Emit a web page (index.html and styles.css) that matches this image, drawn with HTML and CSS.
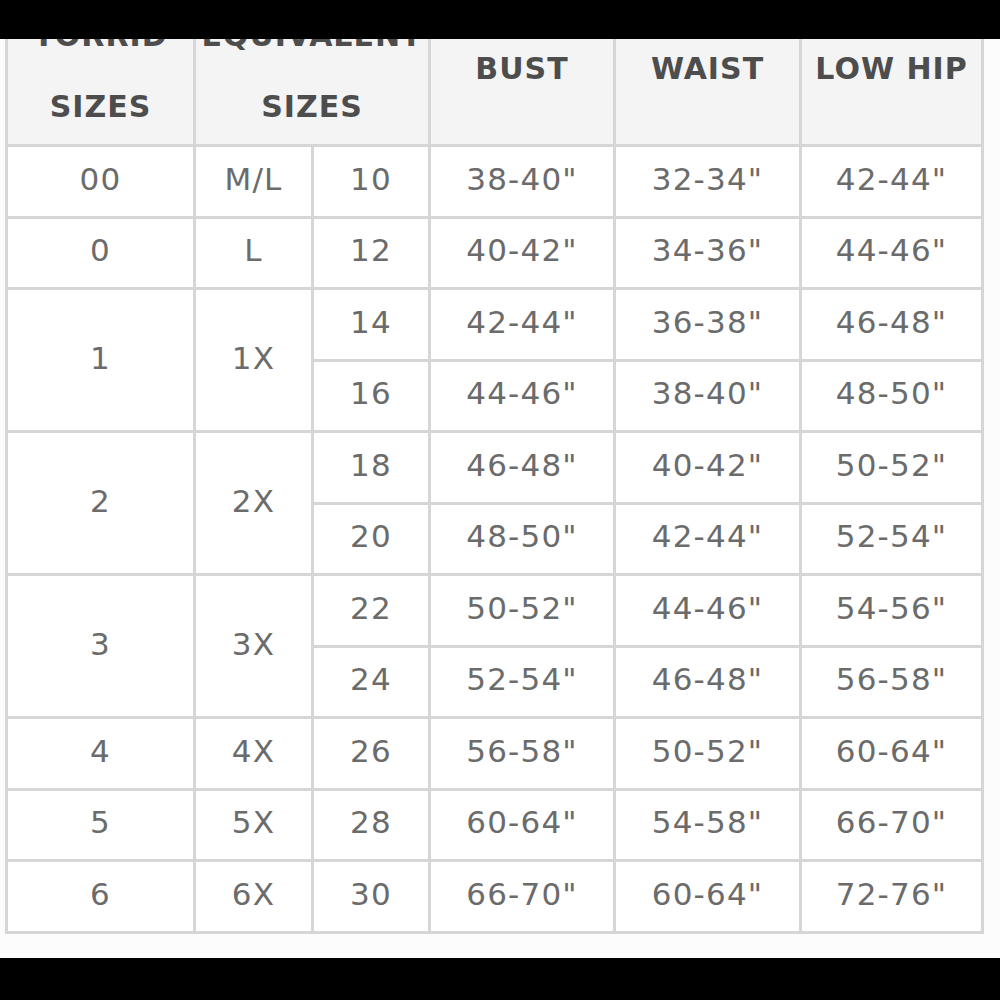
FILE: index.html
```html
<!DOCTYPE html>
<html>
<head>
<meta charset="utf-8">
<link rel="stylesheet" href="styles.css">
</head>
<body>
<div class="topbar"></div>
<div class="viewport">
  <table class="chart">
    <colgroup>
      <col class="c1"><col class="c2"><col class="c3"><col class="c4"><col class="c5"><col class="c6">
    </colgroup>
    <thead>
      <tr class="head">
        <th>TORRID<br>SIZES</th>
        <th colspan="2">EQUIVALENT<br>SIZES</th>
        <th class="single">BUST</th>
        <th class="single">WAIST</th>
        <th class="single">LOW HIP</th>
      </tr>
    </thead>
    <tbody>
      <tr><td>00</td><td>M/L</td><td>10</td><td>38-40"</td><td>32-34"</td><td>42-44"</td></tr>
      <tr><td>0</td><td>L</td><td>12</td><td>40-42"</td><td>34-36"</td><td>44-46"</td></tr>
      <tr><td rowspan="2">1</td><td rowspan="2">1X</td><td>14</td><td>42-44"</td><td>36-38"</td><td>46-48"</td></tr>
      <tr><td>16</td><td>44-46"</td><td>38-40"</td><td>48-50"</td></tr>
      <tr><td rowspan="2">2</td><td rowspan="2">2X</td><td>18</td><td>46-48"</td><td>40-42"</td><td>50-52"</td></tr>
      <tr><td>20</td><td>48-50"</td><td>42-44"</td><td>52-54"</td></tr>
      <tr><td rowspan="2">3</td><td rowspan="2">3X</td><td>22</td><td>50-52"</td><td>44-46"</td><td>54-56"</td></tr>
      <tr><td>24</td><td>52-54"</td><td>46-48"</td><td>56-58"</td></tr>
      <tr><td>4</td><td>4X</td><td>26</td><td>56-58"</td><td>50-52"</td><td>60-64"</td></tr>
      <tr><td>5</td><td>5X</td><td>28</td><td>60-64"</td><td>54-58"</td><td>66-70"</td></tr>
      <tr><td>6</td><td>6X</td><td>30</td><td>66-70"</td><td>60-64"</td><td>72-76"</td></tr>
    </tbody>
  </table>
</div>
<div class="bottombar"></div>
</body>
</html>
```
FILE: styles.css
```css
html, body {
  margin: 0;
  padding: 0;
  background: #ffffff;
}
body {
  width: 1000px;
  height: 1000px;
  overflow: hidden;
  font-family: "DejaVu Sans", "Noto Sans", sans-serif;
}
.topbar {
  height: 39px;
  background: #000;
}
.bottombar {
  height: 42px;
  background: #000;
}
.viewport {
  height: 919px;
  overflow: hidden;
  background: #fdfcfc;
}
.chart {
  margin-top: -45px;
  margin-left: 5px;
  width: 979px;
  table-layout: fixed;
  border-collapse: collapse;
  border: 3px solid #d6d6d6;
  background: #fff;
}
.c1 { width: 188px; }
.c2 { width: 118px; }
.c3 { width: 117px; }
.c4 { width: 185px; }
.c5 { width: 186px; }
.c6 { width: 182px; }
.chart th, .chart td {
  border: 3px solid #d6d6d6;
  padding: 0;
  text-align: center;
  vertical-align: middle;
}
.chart th {
  background: #f4f4f4;
  color: #4d4d4d;
  font-weight: bold;
  font-size: 30px;
  letter-spacing: 1px;
  line-height: 71px;
}
.chart th.single {
  line-height: 36px;
  padding-bottom: 3px;
}
.head {
  height: 150px;
}
.chart tbody tr {
  height: 71.5px;
}
.chart td {
  color: #6b6b6b;
  font-size: 31px;
  letter-spacing: 1.2px;
  line-height: 36px;
  padding-bottom: 5px;
}
```
